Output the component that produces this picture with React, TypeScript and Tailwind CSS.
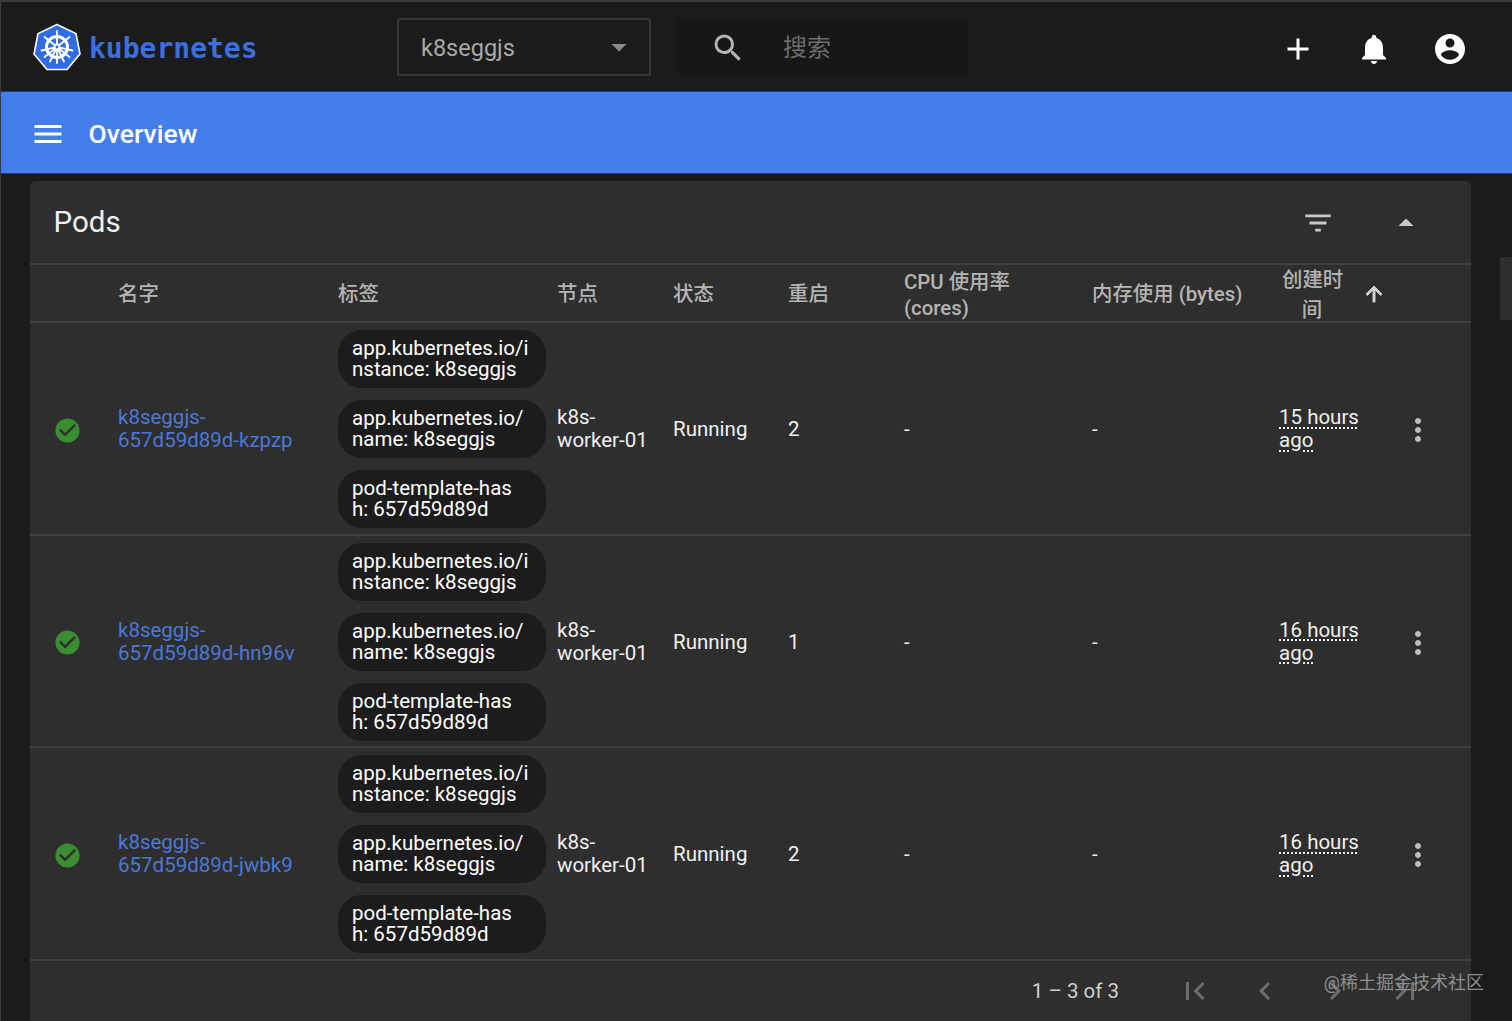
import React from 'react';

const paths = {
  search: "M15.5 14h-.79l-.28-.27A6.471 6.471 0 0 0 16 9.5 6.5 6.5 0 1 0 9.5 16c1.61 0 3.09-.59 4.23-1.57l.27.28v.79l5 4.99L20.49 19l-4.99-5zm-6 0C7.01 14 5 11.99 5 9.5S7.01 5 9.5 5 14 7.01 14 9.5 11.99 14 9.5 14z",
  add: "M19 13h-6v6h-2v-6H5v-2h6V5h2v6h6v2z",
  bell: "M12 22c1.1 0 2-.9 2-2h-4c0 1.1.89 2 2 2zm6-6v-5c0-3.07-1.64-5.64-4.5-6.32V4c0-.83-.67-1.5-1.5-1.5s-1.5.67-1.5 1.5v.68C7.63 5.36 6 7.92 6 11v5l-2 2v1h16v-1l-2-2z",
  account: "M12 2C6.48 2 2 6.48 2 12s4.48 10 10 10 10-4.48 10-10S17.52 2 12 2zm0 3c1.66 0 3 1.34 3 3s-1.34 3-3 3-3-1.34-3-3 1.34-3 3-3zm0 14.2c-2.5 0-4.71-1.28-6-3.22.03-1.99 4-3.08 6-3.08 1.99 0 5.97 1.09 6 3.08-1.29 1.94-3.5 3.22-6 3.22z",
  menu: "M3 18h18v-2H3v2zm0-5h18v-2H3v2zm0-7v2h18V6H3z",
  filter: "M10 18h4v-2h-4v2zM3 6v2h18V6H3zm3 7h12v-2H6v2z",
  dropUp: "M7 14l5-5 5 5z",
  dropDown: "M7 10l5 5 5-5z",
  arrowUp: "M4 12l1.41 1.41L11 7.83V20h2V7.83l5.58 5.59L20 12l-8-8-8 8z",
  check: "M12 2C6.48 2 2 6.48 2 12s4.48 10 10 10 10-4.48 10-10S17.52 2 12 2zm-2 15l-5-5 1.41-1.41L10 14.17l7.59-7.59L19 8l-9 9z",
  more: "M12 8c1.1 0 2-.9 2-2s-.9-2-2-2-2 .9-2 2 .9 2 2 2zm0 2c-1.1 0-2 .9-2 2s.9 2 2 2 2-.9 2-2-.9-2-2-2zm0 6c-1.1 0-2 .9-2 2s.9 2 2 2 2-.9 2-2-.9-2-2-2z",
  first: "M18.41 16.59L13.82 12l4.59-4.59L17 6l-6 6 6 6zM6 6h2v12H6z",
  prev: "M15.41 7.41L14 6l-6 6 6 6 1.41-1.41L10.83 12z",
  next: "M10 6L8.59 7.41 13.17 12l-4.58 4.59L10 18l6-6z",
  last: "M5.59 7.41L10.18 12l-4.59 4.59L7 18l6-6-6-6zM16 6h2v12h-2z",
};

const Icon = ({ d, className }: { d: string; className: string }) => (
  <svg viewBox="0 0 24 24" fill="currentColor" fillRule="evenodd" className={className}>
    <path d={d} />
  </svg>
);

const Logo = () => (
  <svg viewBox="0 0 48 48" className="w-[48px] h-[48px] shrink-0 mt-[-3px] ml-[1px]">
    <path d="M24 1.5 43 10.6 47 31 34 46.5H14L1 31 5 10.6Z" fill="#326ce5" stroke="#fff" strokeWidth="1.6" strokeLinejoin="round" />
    <g stroke="#fff" fill="none">
      <circle cx="24" cy="24" r="10.5" strokeWidth="3" />
      <circle cx="24" cy="24" r="2.4" strokeWidth="2" />
      <path strokeWidth="1.8" strokeLinecap="round" d="M24 8v13M24 27v13M11.5 14 21.6 22M26.4 26 36.5 34M36.5 14 26.4 22M21.6 26 11.5 34M8.5 27.5 21 24.6M27 24.6 39.5 27.5M17 38.5 22.8 26.5M25.2 26.5 31 38.5" />
    </g>
  </svg>
);

const pods = [
  { a: 'k8seggjs-', b: '657d59d89d-kzpzp', restarts: '2', age: '15 hours ago' },
  { a: 'k8seggjs-', b: '657d59d89d-hn96v', restarts: '1', age: '16 hours ago' },
  { a: 'k8seggjs-', b: '657d59d89d-jwbk9', restarts: '2', age: '16 hours ago' },
];

// the chips break in the middle of a word
const labels = [
  ['app.kubernetes.io/i', 'nstance: k8seggjs'],
  ['app.kubernetes.io/', 'name: k8seggjs'],
  ['pod-template-has', 'h: 657d59d89d'],
];

const App = () => {
  return (
    <div className="relative h-[1021px] overflow-hidden flex flex-col bg-[#1b1b1b] border-t-2 border-l border-[#3a3a3a] font-['Roboto','Noto_Sans_CJK_SC',sans-serif]">
      {/* top toolbar */}
      <div className="h-[89px] shrink-0 flex items-center pt-[4px] pl-[31px] pr-[44px]">
        <Logo />
        <span className="ml-[8px] w-[300px] text-[28px] leading-none font-['DejaVu_Sans_Mono',monospace] font-bold text-[#3a6fdc]">kubernetes</span>
        <div className="ml-[8px] mt-[-3px] w-[254px] h-[58px] flex items-center justify-between pl-[22px] pr-[12px] border-2 border-[#363636] rounded-[3px] text-[23.5px] text-[#a8a8a8]">
          <span className="mt-[3px]">k8seggjs</span>
          <Icon d={paths.dropDown} className="w-[36px] h-[36px] text-[#8a8a8a]" />
        </div>
        <div className="ml-[25px] mt-[-3px] w-[292px] h-[56px] flex items-center pt-[2px] pl-[34px] bg-[#171717] rounded-[3px] text-[24px] text-[#6c6c6c]">
          <Icon d={paths.search} className="w-[36px] h-[36px] text-[#b5b5b5]" />
          <span className="ml-[37px]">搜索</span>
        </div>
        <div className="ml-auto flex items-center gap-[40px] text-white">
          <Icon d={paths.add} className="w-[36px] h-[36px]" />
          <Icon d={paths.bell} className="w-[36px] h-[36px]" />
          <Icon d={paths.account} className="w-[36px] h-[36px]" />
        </div>
      </div>

      {/* blue title bar */}
      <div className="h-[83px] shrink-0 flex items-center pt-[3px] pl-[29px] bg-[#437eeb] border-t border-b border-t-[#1d3f80] border-b-[#1d3f80] text-white">
        <Icon d={paths.menu} className="w-[36px] h-[36px]" />
        <span className="ml-[22.5px] text-[26.5px] font-medium">Overview</span>
      </div>

      {/* pods card */}
      <div className="ml-[29px] mr-[41px] mt-[7px] flex-1 flex flex-col bg-[#2e2e2e] rounded-t-[6px]">
        <div className="h-[84px] shrink-0 flex items-center pl-[23.5px] border-b-2 border-[#404040] text-[#f0f0f0]">
          <span className="text-[29.5px]">Pods</span>
          <Icon d={paths.filter} className="ml-auto mt-[2px] w-[34px] h-[34px] text-[#c8c8c8]" />
          <Icon d={paths.dropUp} className="ml-[53px] mr-[47px] mt-[2px] w-[36px] h-[36px] text-[#c8c8c8]" />
        </div>

        <div className="h-[58px] shrink-0 pb-[7px] grid grid-cols-[88px_220px_219px_116px_115px_116px_188px_190px_1fr] items-center border-b-2 border-[#404040] text-[20.4px] leading-[30px] font-medium text-[#b4b4b4]">
          <span />
          <span className="-mt-[2px]">名字</span>
          <span className="-mt-[2px]">标签</span>
          <span className="-mt-[2px]">节点</span>
          <span className="-mt-[2px]">状态</span>
          <span className="-mt-[2px]">重启</span>
          <span className="leading-[26px]">CPU 使用率<br />(cores)</span>
          <span className="-mt-[2px]">内存使用 (bytes)</span>
          <div className="flex items-center">
            <span className="w-[60px] text-center whitespace-nowrap">创建时<br />间</span>
            <Icon d={paths.arrowUp} className="ml-[20px] -mt-[3px] w-[24px] h-[24px] text-[#d0d0d0] stroke-current stroke-[1px]" />
          </div>
        </div>

        {pods.map((pod) => (
          <div key={pod.b} className="h-[212.6px] shrink-0 pt-[2px] grid grid-cols-[88px_220px_219px_116px_115px_116px_188px_187px_121px_1fr] items-center border-b-2 border-[#404040] text-[20.5px] leading-[23px] text-[#f0f0f0]">
            <Icon d={paths.check} className="ml-[23px] mt-[2px] w-[29px] h-[29px] text-[#3a8e32]" />
            <span className="text-[#4b78d8]">{pod.a}<br />{pod.b}</span>
            <div className="flex flex-col gap-[12px] w-[208px]">
              {labels.map((label) => (
                <div key={label[0]} className="h-[58px] flex items-center pl-[14px] pr-[14px] rounded-[24px] bg-[#1c1c1c] leading-[21px] whitespace-nowrap text-white">
                  <span>{label[0]}<br />{label[1]}</span>
                </div>
              ))}
            </div>
            <span>k8s-<br />worker-01</span>
            <span className="mt-[1px]">Running</span>
            <span className="mt-[1px]">{pod.restarts}</span>
            <span className="mt-[1px]">-</span>
            <span className="mt-[1px]">-</span>
            <span className="w-[100px] underline decoration-dotted underline-offset-[3px]">{pod.age}</span>
            <Icon d={paths.more} className="mt-[2px] w-[36px] h-[36px] text-[#bdbdbd]" />
          </div>
        ))}

        <div className="flex-1 flex items-center justify-end pr-[48px] text-[#cfcfcf]">
          <span className="mr-[58px] text-[20.5px]">1 – 3 of 3</span>
          <div className="flex items-center gap-[34px] text-[#6e6e6e]">
            <Icon d={paths.first} className="w-[36px] h-[36px]" />
            <Icon d={paths.prev} className="w-[36px] h-[36px]" />
            <Icon d={paths.next} className="w-[36px] h-[36px]" />
            <Icon d={paths.last} className="w-[36px] h-[36px]" />
          </div>
        </div>
      </div>

      {/* scrollbar thumb */}
      <div className="absolute right-0 top-[255px] w-[12px] h-[63px] bg-[#2e2e2e]" />
      {/* watermark */}
      <span className="absolute right-[28px] top-[970px] text-[18px] leading-[22px] text-[#8e8e8e]">@稀土掘金技术社区</span>
    </div>
  );
};

export default App;
